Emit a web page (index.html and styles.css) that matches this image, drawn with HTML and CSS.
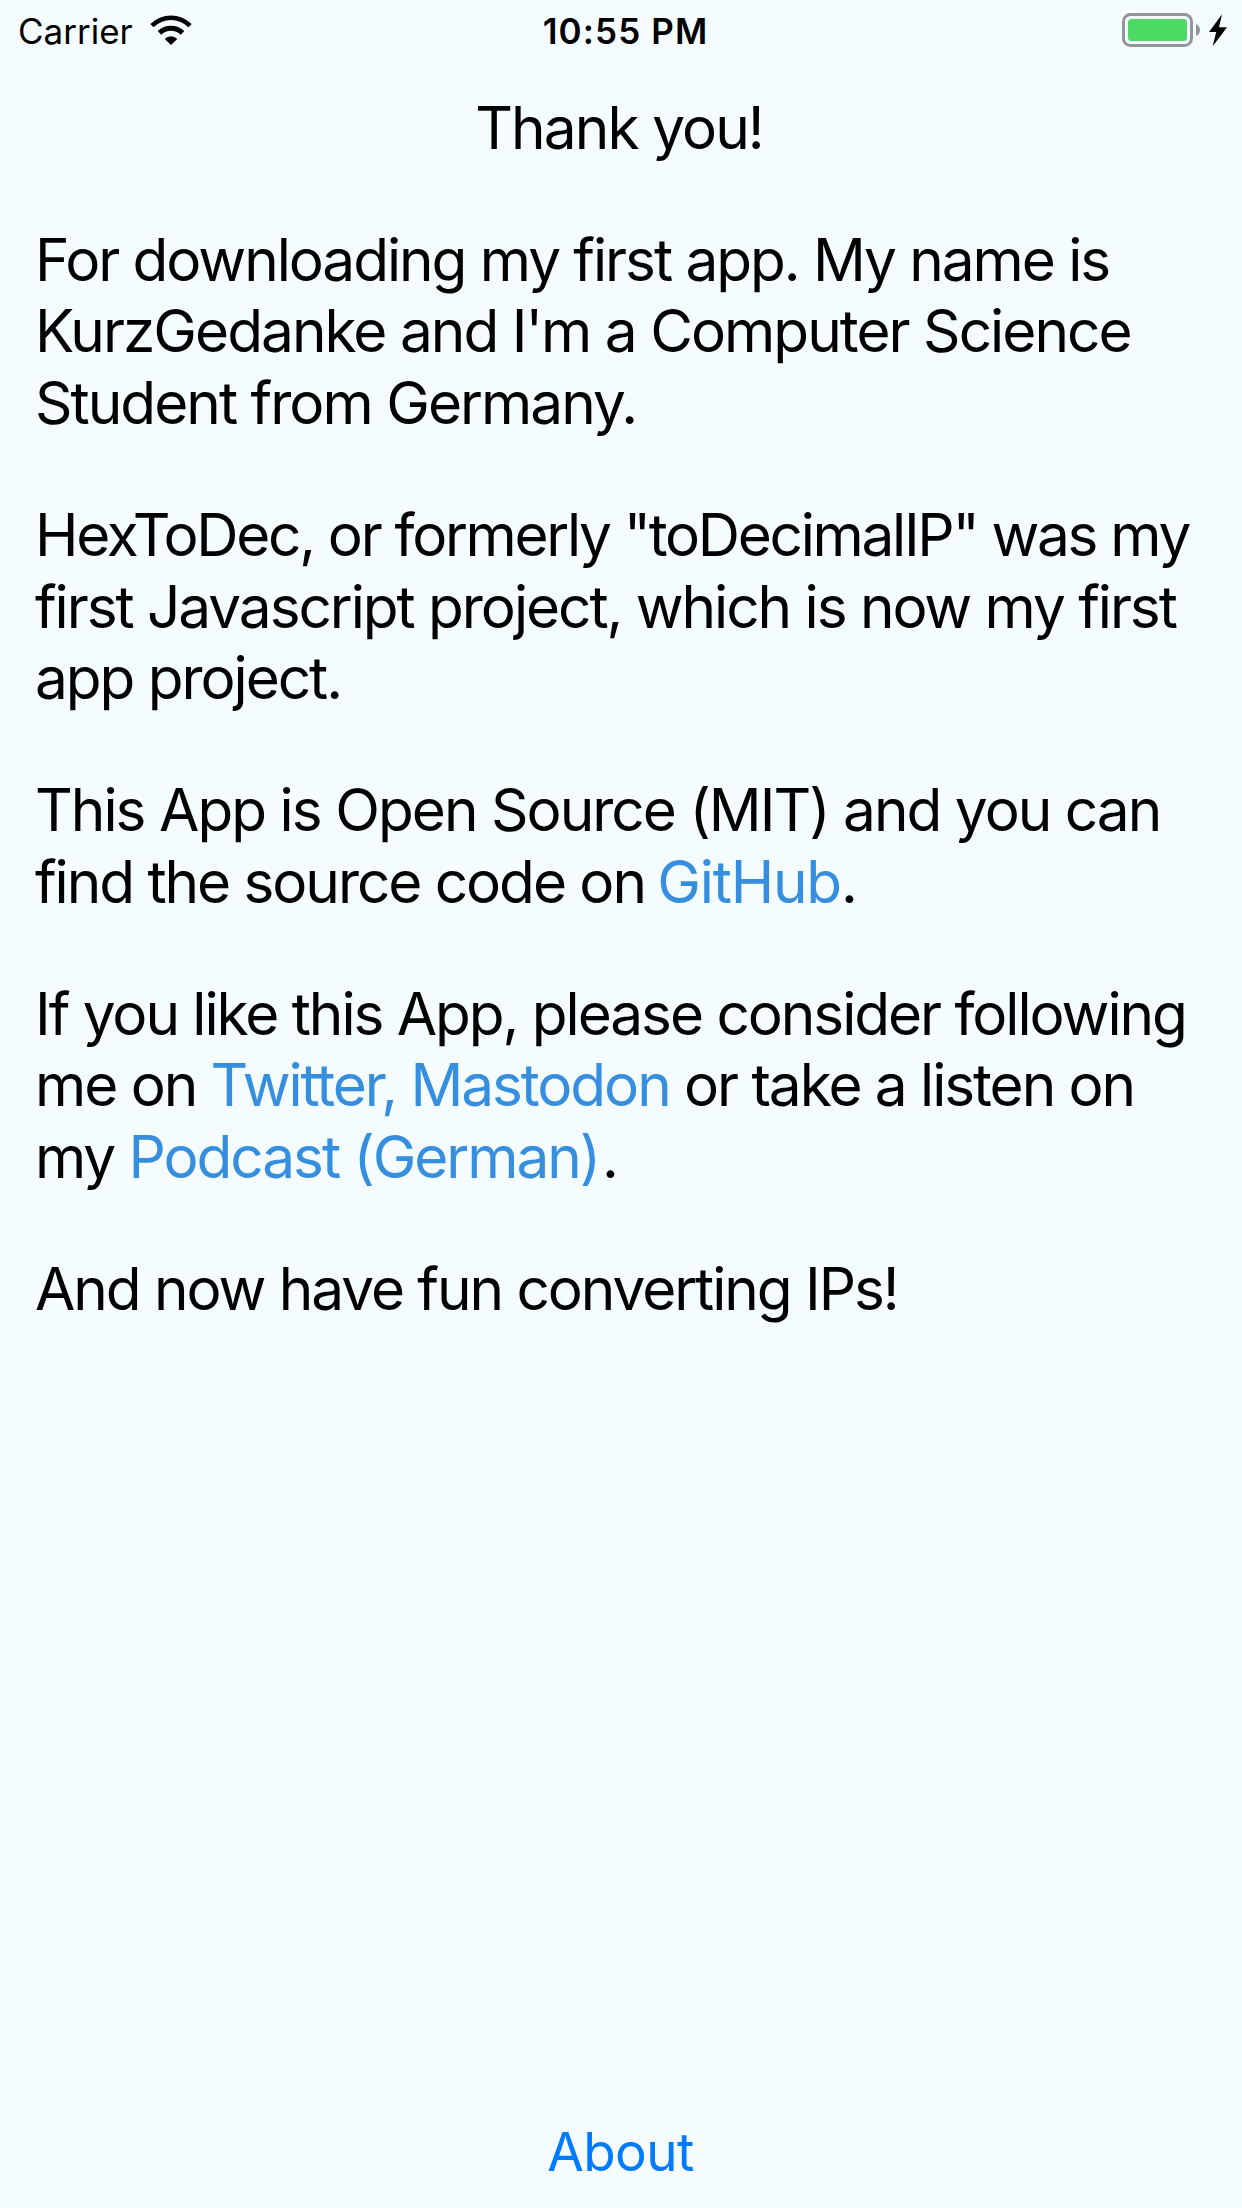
FILE: index.html
```html
<!DOCTYPE html>
<html lang="en">
<head>
<meta charset="utf-8">
<title>About</title>
<link rel="stylesheet" href="styles.css">
</head>
<body>
<header class="status">
  <div class="status-left">
    <span class="carrier">Carrier</span>
    <svg class="wifi" viewBox="0 0 42 30" width="42" height="30"><path d="M.3 9A29.500 29.500 0 0 1 41.700 9L38.500 12.300A24.900 24.900 0 0 0 3.500 12.300ZM7.700 16A19.400 19.400 0 0 1 34.300 16L30.800 19.700A14.300 14.300 0 0 0 11.200 19.700ZM14.700 24A8.800 8.800 0 0 1 27.300 24L21 30Z"/></svg>
  </div>
  <span class="time">10:55 PM</span>
  <div class="status-right">
    <svg class="battery" viewBox="0 0 105 34" width="105" height="34"><rect x="1.500" y="1.500" width="68" height="31" rx="7" fill="none" stroke="#929699" stroke-width="3"/><rect x="6" y="6" width="59" height="22" rx="3.500" fill="#4cd964"/><path d="M74 11q4 2 4 6t-4 6z" fill="#929699"/><path d="M100 1.200L87 19h7.200l-3.500 14.300L105 14.300h-8z"/></svg>
  </div>
</header>
<main class="content">
  <h1 class="title">Thank you!</h1>
  <p class="para">For downloading my first app. My name is<br><span class="loose">KurzGedanke and I'm a Computer Science</span><br><span class="loose">Student from Germany.</span></p>
  <p class="para"><span class="tight">HexToDec, or formerly "toDecimalIP" was my</span><br>first Javascript project, which is now my first<br>app project.</p>
  <p class="para"><span class="loose">This App is Open Source (MIT) and you can</span><br>find the source code on <a class="link github">GitHub</a>.</p>
  <p class="para">If you like this App, please consider following<br>me on <a class="link">Twitter,</a> <a class="link">Mastodon</a> or take a listen on<br>my <a class="link podcast">Podcast (German)</a>.</p>
  <p class="para">And now have fun converting IPs!</p>
</main>
<footer class="footer"><a class="about">About</a></footer>
</body>
</html>
```
FILE: styles.css
```css
* { box-sizing: border-box; }
body { margin: 0; height: 2208px; background: #f5fcff; color: #000; font-family: Inter, "Liberation Sans", sans-serif; display: flex; flex-direction: column; overflow: hidden; }
.status { height: 60px; padding: 0 15px 0 18px; display: grid; grid-template-columns: 1fr auto 1fr; align-items: center; font-size: 35px; }
.status-left { display: flex; align-items: center; gap: 17px; }
.carrier, .time { padding-top: 1px; }
.status-right { display: flex; justify-content: flex-end; }
.time { font-weight: 600; letter-spacing: 1.1px; padding-left: 6px; }
.content { flex: 1; padding: 31.8px 35px 0; font-size: 58.5px; line-height: 71.6px; letter-spacing: -2.05px; white-space: nowrap; }
.title { margin: 0 0 60.4px; padding-right: 4px; font-size: inherit; font-weight: 400; text-align: center; letter-spacing: -1.9px; }
.para { margin: 0 0 60.4px; }
.tight { letter-spacing: -2.3px; }
.loose { letter-spacing: -1.97px; }
.link { color: #358fde; }
.github { letter-spacing: -1.2px; margin-left: -2px; }
.podcast { margin-right: 3px; }
.footer { height: 110px; padding-right: 1px; text-align: center; font-size: 53px; line-height: 109px; letter-spacing: -0.6px; }
.about { color: #007aff; }
```
